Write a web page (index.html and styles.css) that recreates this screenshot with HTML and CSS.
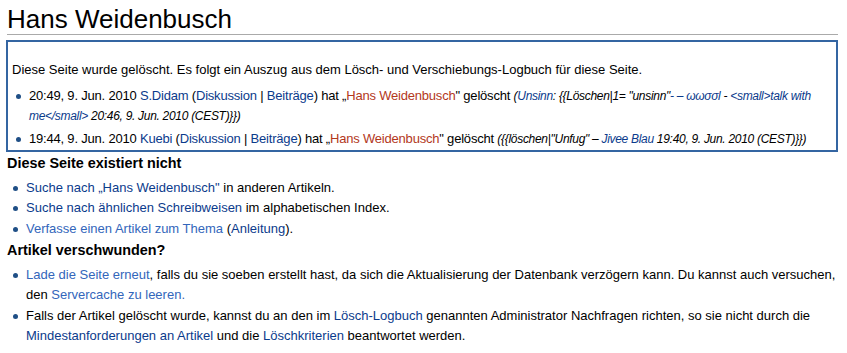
FILE: index.html
```html
<!DOCTYPE html>
<html lang="de">
<head>
    <meta charset="UTF-8">
    <title>Hans Weidenbusch</title>
    <link rel="stylesheet" href="styles.css">
</head>
<body>
    <div class="content">
        <h1 class="first-heading">Hans Weidenbusch</h1>

        <div class="log-box">
            <p>Diese Seite wurde gelöscht. Es folgt ein Auszug aus dem Lösch- und Verschiebungs-Logbuch für diese Seite.</p>
            <ul>
                <li>20:49, 9. Jun. 2010 <a href="#">S.Didam</a> (<a href="#">Diskussion</a> | <a href="#">Beiträge</a>) hat „<a href="#" class="new">Hans Weidenbusch</a>" gelöscht <span class="comment">(<a href="#">Unsinn</a>: {{Löschen|1= "unsinn"<a href="#">- – ωωσσl</a> - <a href="#">&lt;small&gt;talk with me&lt;/small&gt;</a> 20:46, 9. Jun. 2010 (CEST)}})</span></li>
                <li>19:44, 9. Jun. 2010 <a href="#">Kuebi</a> (<a href="#">Diskussion</a> | <a href="#">Beiträge</a>) hat „<a href="#" class="new">Hans Weidenbusch</a>" gelöscht <span class="comment">({{löschen|"Unfug" – <a href="#">Jivee Blau</a> 19:40, 9. Jun. 2010 (CEST)}})</span></li>
            </ul>
        </div>

        <h3>Diese Seite existiert nicht</h3>
        <ul>
            <li><a href="#">Suche nach „Hans Weidenbusch"</a> in anderen Artikeln.</li>
            <li><a href="#">Suche nach ähnlichen Schreibweisen</a> im alphabetischen Index.</li>
            <li><a href="#" class="external">Verfasse einen Artikel zum Thema</a> (<a href="#">Anleitung</a>).</li>
        </ul>

        <h3>Artikel verschwunden?</h3>
        <ul>
            <li><a href="#" class="external">Lade die Seite erneut</a>, falls du sie soeben erstellt hast, da sich die Aktualisierung der Datenbank verzögern kann. Du kannst auch versuchen, den <a href="#" class="external">Servercache zu leeren.</a></li>
            <li>Falls der Artikel gelöscht wurde, kannst du an den im <a href="#">Lösch-Logbuch</a> genannten Administrator Nachfragen richten, so sie nicht durch die <a href="#">Mindestanforderungen an Artikel</a> und die <a href="#">Löschkriterien</a> beantwortet werden.</li>
        </ul>
    </div>
</body>
</html>
```

FILE: styles.css
```css
body {
    margin: 0;
    background: #fff;
    color: #000;
    font-family: 'Liberation Sans', Arial, sans-serif;
    font-size: 13px;
    line-height: 20.5px;
}

.content {
    padding: 4px 9px 0 7px;
}

a {
    color: #0b3b8c;
    text-decoration: none;
}

a.external {
    color: #3366bb;
}

a.new {
    color: #b3381c;
}

.first-heading {
    margin: 0 0 5px;
    padding: 0;
    font-size: 26px;
    font-weight: normal;
    line-height: 30px;
    border-bottom: 1px solid #aaa;
}

.log-box {
    margin-left: -1px;
    border: 2px solid #3465a2;
    padding: 18px 4px 0 4px;
}

.log-box p {
    margin: 0 0 5px;
}

.log-box li {
    letter-spacing: -0.2px;
}

.comment {
    font-style: italic;
    font-size: 12px;
    letter-spacing: -0.3px;
}

ul {
    margin: 0 0 1px;
    padding: 0 0 0 19px;
    list-style: none;
}

ul li {
    position: relative;
}

ul li::before {
    content: "";
    position: absolute;
    left: -13px;
    top: 8px;
    width: 5px;
    height: 5px;
    border-radius: 50%;
    background: #1f4f86;
}

.log-box ul {
    padding-left: 17px;
}

.log-box li + li {
    margin-top: 2px;
}

h3 {
    margin: 1px 0 4px;
    font-size: 14.4px;
    font-weight: bold;
    line-height: 20.5px;
}
```
